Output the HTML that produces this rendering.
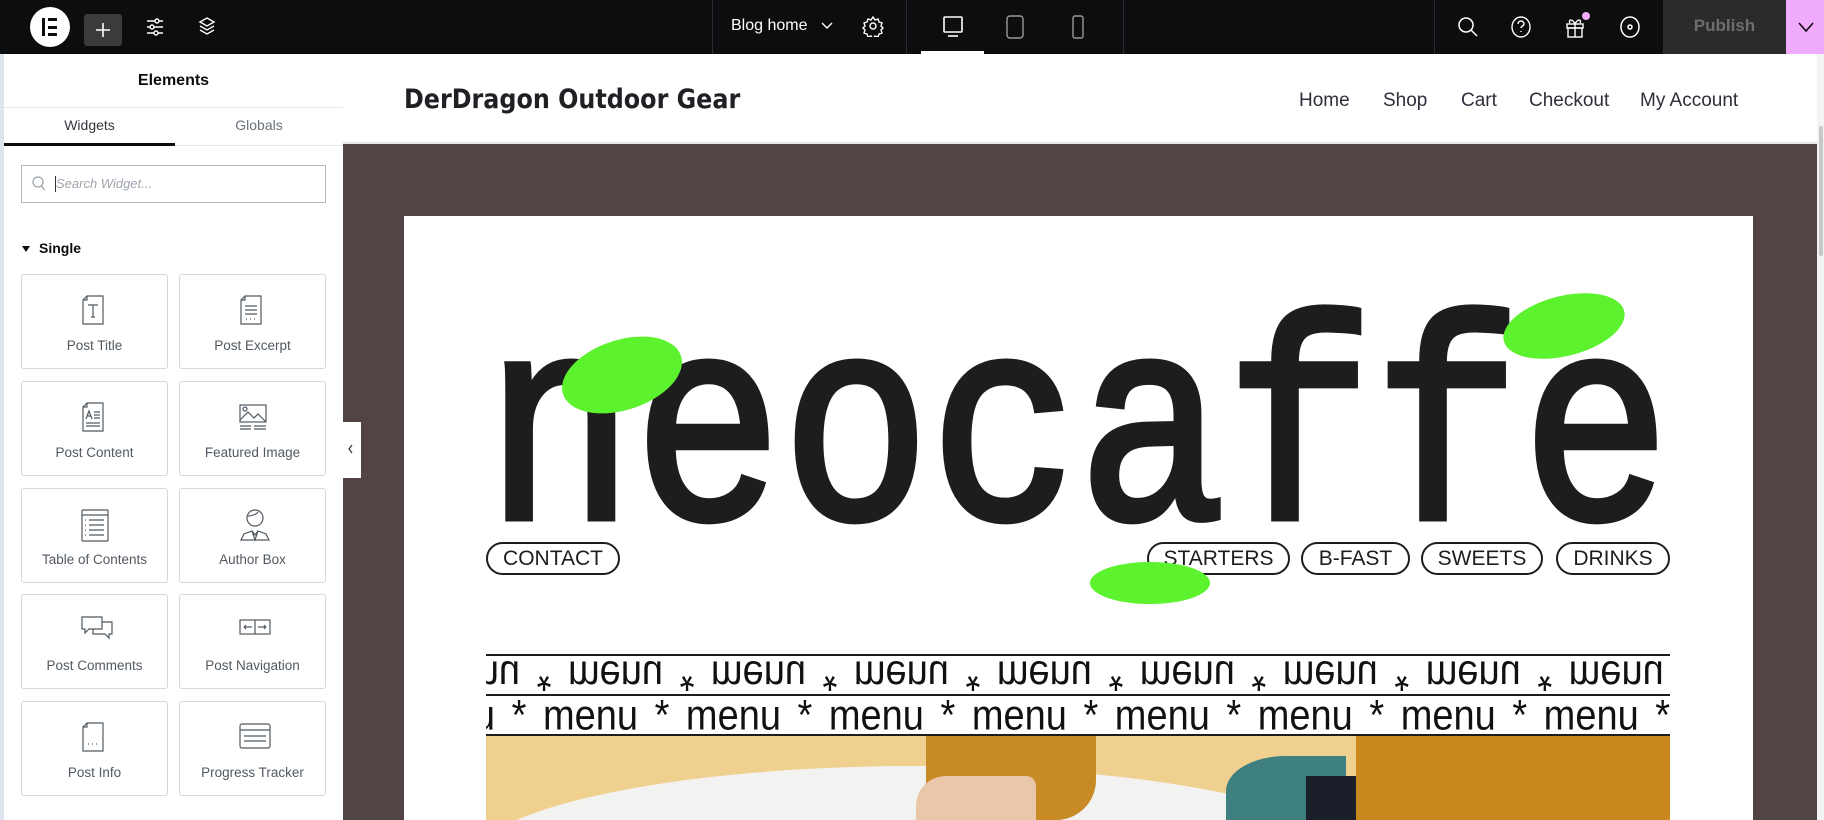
<!DOCTYPE html>
<html><head><meta charset="utf-8"><style>
*{box-sizing:border-box;margin:0;padding:0}
body{width:1824px;height:820px;overflow:hidden;font-family:"Liberation Sans",sans-serif;background:#fff;position:relative}
.a{position:absolute}
.top{left:0;top:0;width:1824px;height:54px;background:#0c0d0e}
.card{position:absolute;width:147px;height:95px;border:1px solid #d5d8dc;border-radius:3px;background:#fff}
.card svg{position:absolute;left:58px;top:19px}
.card span{position:absolute;left:0;right:0;top:63px;text-align:center;font-size:13.5px;color:#515962}
.pill{position:absolute;top:542px;height:33px;border:2px solid #1d1d1d;border-radius:17px;font-size:21px;color:#1d1d1d;text-align:center;line-height:29px;font-family:"Liberation Sans Narrow","Liberation Sans",sans-serif}
.nav{position:absolute;top:90px;font-size:19px;color:#2d2f3a}
.mq{position:absolute;left:486px;width:1184px;overflow:hidden;white-space:nowrap;font-size:38px;color:#111;word-spacing:6px;font-family:"Liberation Sans",sans-serif}
.mq span{display:inline-block}
</style></head><body>
<div class="a" style="left:0;top:0;width:4px;height:820px;background:#dde6ef"></div>
<div class="a top"></div>
<div class="a" style="left:30px;top:7px;width:40px;height:40px;border-radius:50%;background:#fff"></div>
<div class="a" style="left:42px;top:18px;width:3px;height:18px;background:#0c0d0e"></div>
<div class="a" style="left:48px;top:18px;width:9px;height:3px;background:#0c0d0e"></div>
<div class="a" style="left:48px;top:25.5px;width:9px;height:3px;background:#0c0d0e"></div>
<div class="a" style="left:48px;top:33px;width:9px;height:3px;background:#0c0d0e"></div>
<div class="a" style="left:84px;top:14px;width:38px;height:32px;border-radius:3px;background:#3a3b3d"></div>
<svg class="a" style="left:93px;top:20px" width="20" height="20"><path d="M10 3v14M3 10h14" stroke="#fff" stroke-width="1.6"/></svg>
<svg class="a" style="left:144px;top:16px" width="22" height="22" fill="none" stroke="#fff" stroke-width="1.4"><path d="M3 5h16M3 11h16M3 17h16"/><circle cx="13" cy="5" r="2" fill="#0c0d0e"/><circle cx="8" cy="11" r="2" fill="#0c0d0e"/><circle cx="12" cy="17" r="2" fill="#0c0d0e"/></svg>
<svg class="a" style="left:196px;top:15px" width="22" height="24" fill="none" stroke="#fff" stroke-width="1.4"><path d="M11 3l7 4-7 4-7-4z"/><path d="M4 11l7 4 7-4M4 15l7 4 7-4"/></svg>
<div class="a" style="left:712px;top:0;width:1px;height:54px;background:#2a2b2e"></div>
<div class="a" style="left:731px;top:17px;font-size:16px;color:#fff">Blog home</div>
<svg class="a" style="left:820px;top:20px" width="14" height="12"><path d="M2 3l5 5 5-5" stroke="#fff" fill="none" stroke-width="1.4"/></svg>
<svg class="a" style="left:862px;top:15px" width="22" height="22" fill="none" stroke="#fff" stroke-width="1.4"><circle cx="11" cy="11" r="3"/><path d="M11 2l2 3 3-1 1 3 3 1-1 3 2 2-2 2 1 3-3 1-1 3-3-1-2 3-2-3-3 1-1-3-3-1 1-3-2-2 2-2-1-3 3-1 1-3 3 1z"/></svg>
<div class="a" style="left:906px;top:0;width:1px;height:54px;background:#2a2b2e"></div>
<svg class="a" style="left:941px;top:15px" width="24" height="24" fill="none" stroke="#fff" stroke-width="1.6"><rect x="3" y="2" width="18" height="15" rx="1"/><path d="M7 21h10"/></svg>
<div class="a" style="left:921px;top:51px;width:63px;height:3px;background:#fff"></div>
<svg class="a" style="left:1005px;top:14px" width="20" height="26" fill="none" stroke="#9a9a9a" stroke-width="1.4"><rect x="2" y="2" width="16" height="22" rx="3"/></svg>
<svg class="a" style="left:1071px;top:14px" width="14" height="26" fill="none" stroke="#9a9a9a" stroke-width="1.4"><rect x="2" y="2" width="10" height="22" rx="2"/></svg>
<div class="a" style="left:1123px;top:0;width:1px;height:54px;background:#2a2b2e"></div>
<div class="a" style="left:1434px;top:0;width:1px;height:54px;background:#2a2b2e"></div>
<svg class="a" style="left:1456px;top:15px" width="24" height="24" fill="none" stroke="#fff" stroke-width="1.5"><circle cx="10" cy="10" r="7"/><path d="M15 15l6 6"/></svg>
<svg class="a" style="left:1510px;top:15px" width="22" height="24" fill="none" stroke="#fff" stroke-width="1.4"><ellipse cx="11" cy="12" rx="9" ry="10"/><path d="M8 9a3 3 0 116 0c0 2-3 2-3 4M11 16v1"/></svg>
<svg class="a" style="left:1564px;top:15px" width="22" height="24" fill="none" stroke="#fff" stroke-width="1.4"><rect x="3" y="9" width="16" height="4"/><rect x="4" y="13" width="14" height="9"/><path d="M11 9v13M11 9c-3-6-7-4-5-1M11 9c3-6 7-4 5-1"/></svg>
<div class="a" style="left:1582px;top:12px;width:8px;height:8px;border-radius:50%;background:#f0abfc"></div>
<svg class="a" style="left:1618px;top:15px" width="24" height="24" fill="none" stroke="#fff" stroke-width="1.5"><ellipse cx="12" cy="12" rx="9" ry="10"/><circle cx="12" cy="12" r="2"/></svg>
<div class="a" style="left:1663px;top:0;width:123px;height:54px;background:#2b2b2b;color:#6d6d6d;font-size:17px;font-weight:bold;text-align:center;line-height:52px">Publish</div>
<div class="a" style="left:1786px;top:0;width:38px;height:54px;background:#f0abfc"></div>
<svg class="a" style="left:1797px;top:20px" width="18" height="14"><path d="M2 3l7 8 7-8" stroke="#0c0d0e" fill="none" stroke-width="1.6"/></svg>

<div class="a" style="left:4px;top:54px;width:339px;height:766px;background:#fff"></div>
<div class="a" style="left:4px;top:72px;width:339px;text-align:center;font-size:16px;font-weight:bold;color:#0c0d0e">Elements</div>
<div class="a" style="left:4px;top:107px;width:339px;height:1px;background:#e6e8ea"></div>
<div class="a" style="left:4px;top:117px;width:171px;text-align:center;font-size:14px;color:#33373d">Widgets</div>
<div class="a" style="left:175px;top:117px;width:168px;text-align:center;font-size:14px;color:#69727d">Globals</div>
<div class="a" style="left:4px;top:145px;width:339px;height:1px;background:#e6e8ea"></div>
<div class="a" style="left:4px;top:143px;width:171px;height:3px;background:#0c0d0e"></div>
<div class="a" style="left:21px;top:165px;width:305px;height:38px;border:1px solid #b5b8bd"></div>
<svg class="a" style="left:32px;top:176px" width="14" height="16" fill="none" stroke="#9da5ae" stroke-width="1.3"><circle cx="6" cy="6" r="5"/><path d="M9.5 10l3 4"/></svg>
<div class="a" style="left:55px;top:176px;width:1px;height:16px;background:#333"></div>
<div class="a" style="left:56px;top:176px;font-size:13px;font-style:italic;color:#9da5ae">Search Widget...</div>
<svg class="a" style="left:21px;top:244px" width="10" height="10"><path d="M1 2h8L5 8z" fill="#0c0d0e"/></svg>
<div class="a" style="left:39px;top:240px;font-size:14px;font-weight:bold;color:#0c0d0e">Single</div>

<div class="card" style="left:21px;top:274px"><svg width="30" height="32" fill="none" stroke="#515962" stroke-width="1.2"><path d="M7 2h16v28H3V6zM7 2v4H3"/><path d="M8 11h10M13 11v12M11 23h4"/></svg><span>Post Title</span></div>
<div class="card" style="left:179px;top:274px"><svg width="30" height="32" fill="none" stroke="#515962" stroke-width="1.2"><path d="M7 2h16v28H3V6zM7 2v4H3"/><path d="M7 12h12M7 16h12M7 20h12M8 25h1M12 25h1M16 25h1"/></svg><span>Post Excerpt</span></div>
<div class="card" style="left:21px;top:381px"><svg width="30" height="32" fill="none" stroke="#515962" stroke-width="1.2"><path d="M7 2h16v28H3V6zM7 2v4H3"/><path d="M6 18l3-8 3 8M7 15h4M14 11h6M14 14h6M14 17h6M6 22h14M6 25h14"/></svg><span>Post Content</span></div>
<div class="card" style="left:179px;top:381px"><svg width="30" height="32" fill="none" stroke="#515962" stroke-width="1.2"><rect x="2" y="4" width="26" height="17"/><circle cx="7" cy="8" r="2"/><path d="M2 19l8-8 6 6 4-4 8 8M2 25h11M16 25h12M2 28h11M16 28h12"/></svg><span>Featured Image</span></div>
<div class="card" style="left:21px;top:488px"><svg width="30" height="34" fill="none" stroke="#515962" stroke-width="1.2"><rect x="2" y="2" width="26" height="31" rx="1"/><path d="M2 7h26M9 12h15M9 17h15M9 22h15M9 27h15M5 12h1M5 17h1M5 22h1M5 27h1"/></svg><span>Table of Contents</span></div>
<div class="card" style="left:179px;top:488px"><svg width="34" height="34" fill="none" stroke="#515962" stroke-width="1.2"><circle cx="17" cy="10" r="8"/><path d="M3 32l3-6 8-3 3 4 3-4 8 3 3 6zM14 23l3 9 3-9M10 8c4 0 9-2 10-4"/></svg><span>Author Box</span></div>
<div class="card" style="left:21px;top:594px"><svg width="34" height="30" fill="none" stroke="#515962" stroke-width="1.2"><path d="M2 3h20v12H9l-4 4v-4H2z"/><path d="M22 8h10v12h-3v4l-4-4H13v-5"/></svg><span>Post Comments</span></div>
<div class="card" style="left:179px;top:594px"><svg width="34" height="30" fill="none" stroke="#515962" stroke-width="1.2"><rect x="2" y="6" width="30" height="14"/><path d="M17 6v14M6 13h8M6 13l2-2M6 13l2 2M20 13h8M28 13l-2-2M28 13l-2 2"/></svg><span>Post Navigation</span></div>
<div class="card" style="left:21px;top:701px"><svg width="30" height="32" fill="none" stroke="#515962" stroke-width="1.2"><path d="M7 2h16v28H3V6zM7 2v4H3"/><path d="M8 23h1M12 23h1M16 23h1"/></svg><span>Post Info</span></div>
<div class="card" style="left:179px;top:701px"><svg width="34" height="30" fill="none" stroke="#515962" stroke-width="1.2"><rect x="2" y="3" width="30" height="24" rx="2"/><path d="M2 9h30M6 15h22M6 20h22"/></svg><span>Progress Tracker</span></div>

<div class="a" style="left:343px;top:54px;width:1474px;height:90px;background:#fff;border-bottom:2px solid #e8e8e8"></div>
<div class="a" style="left:404px;top:84px;font-size:26.5px;color:#1f1f24;font-family:'DejaVu Sans Condensed','Liberation Sans',sans-serif;font-weight:bold">DerDragon Outdoor Gear</div>
<div class="nav" style="left:1299px">Home</div>
<div class="nav" style="left:1383px">Shop</div>
<div class="nav" style="left:1461px">Cart</div>
<div class="nav" style="left:1529px">Checkout</div>
<div class="nav" style="left:1640px">My Account</div>
<div class="a" style="left:343px;top:144px;width:1474px;height:676px;background:#524444"></div>
<div class="a" style="left:1817px;top:54px;width:7px;height:766px;background:#f3f3f3"></div>
<div class="a" style="left:1819px;top:126px;width:4px;height:130px;background:#c8c8c8;border-radius:2px"></div>
<div class="a" style="left:343px;top:422px;width:18px;height:56px;background:#fff"></div>
<svg class="a" style="left:346px;top:443px" width="10" height="12"><path d="M6 2L3 6l3 4" stroke="#333" fill="none" stroke-width="1.2"/></svg>

<div class="a" style="left:404px;top:216px;width:1349px;height:604px;background:#fff"></div>
<svg class="a" style="left:404px;top:216px" width="1349" height="604">
<text x="82" y="302" font-family="Liberation Mono,monospace" font-size="290" fill="#1d1d1d" stroke="#1d1d1d" stroke-width="7" textLength="1184" lengthAdjust="spacingAndGlyphs">neocaffe</text>
<ellipse cx="218" cy="159" rx="62" ry="35" fill="#5cf22e" transform="rotate(-18 218 159)"/>
<ellipse cx="1160" cy="110" rx="62" ry="30" fill="#5cf22e" transform="rotate(-14 1160 110)"/>
</svg>
<div class="pill" style="left:486px;width:134px">CONTACT</div>
<div class="pill" style="left:1147px;width:143px">STARTERS</div>
<div class="pill" style="left:1301px;width:109px">B-FAST</div>
<div class="pill" style="left:1421px;width:122px">SWEETS</div>
<div class="pill" style="left:1556px;width:114px">DRINKS</div>
<div class="a" style="left:1090px;top:562px;width:120px;height:42px;border-radius:50%;background:#5cf22e"></div>

<div class="a" style="left:486px;top:654px;width:1184px;height:2px;background:#1d1d1d"></div>
<div class="a" style="left:486px;top:694px;width:1184px;height:2px;background:#1d1d1d"></div>
<div class="a" style="left:486px;top:734px;width:1184px;height:2px;background:#1d1d1d"></div>
<div class="mq" style="top:656px;height:38px;line-height:38px;transform:scaleY(-1.12)"><span style="margin-left:-61px">menu * menu * menu * menu * menu * menu * menu * menu * menu * menu *</span></div>
<div class="mq" style="top:696px;height:38px;line-height:40px;transform:scaleY(1.12)"><span style="margin-left:-86px">menu * menu * menu * menu * menu * menu * menu * menu * menu * menu *</span></div>
<div class="a" style="left:486px;top:736px;width:1184px;height:84px;overflow:hidden;background:#f0d08f">
<div class="a" style="left:-20px;top:30px;width:900px;height:200px;border-radius:50%;background:#f2f2f0"></div>
<div class="a" style="left:440px;top:0;width:170px;height:84px;background:#c88a24;border-radius:0 0 40px 0"></div>
<div class="a" style="left:430px;top:40px;width:120px;height:44px;background:#e9c7a8;border-radius:30px 10px 0 0"></div>
<div class="a" style="left:740px;top:20px;width:120px;height:70px;background:#3e7f80;border-radius:50% 0 0 0"></div>
<div class="a" style="left:820px;top:40px;width:80px;height:44px;background:#1b1f2a"></div>
<div class="a" style="left:870px;top:0;width:314px;height:84px;background:#c8881e"></div>
</div>
</body></html>
